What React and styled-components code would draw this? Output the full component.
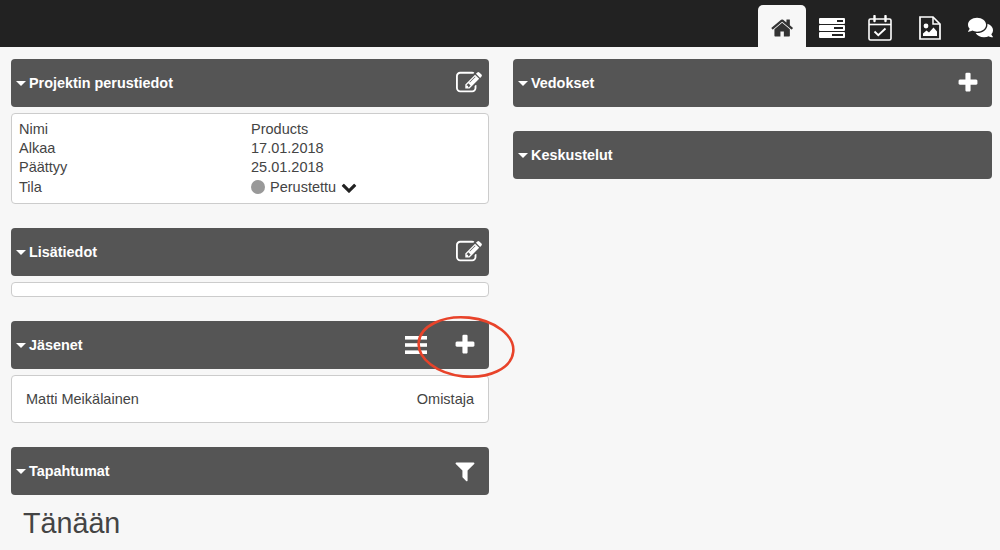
import React from "react";
import styled, { createGlobalStyle } from "styled-components";
import { FaComments } from "react-icons/fa";

const GlobalStyle = createGlobalStyle`
  html, body {
    margin: 0;
    height: 100%;
    overflow: hidden;
    background: #f7f7f7;
    font-family: "Liberation Sans", Arial, sans-serif;
    color: #444;
  }
`;

const glyphs = {
  home: "M1408 992v480q0 26-19 45t-45 19h-384v-384h-256v384h-384q-26 0-45-19t-19-45v-480q0-1 .5-3t.5-3l575-474 575 474q1 2 1 6zm223-69l-62 74q-8 9-21 11h-3q-13 0-21-7l-692-577-692 577q-12 8-24 7-13-2-21-11l-62-74q-8-10-7-23.5t11-21.5l719-599q32-26 76-26t76 26l244 204v-195q0-14 9-23t23-9h192q14 0 23 9t9 23v408l219 182q10 8 11 21.5t-7 23.5z",
  edit: "M888 1184l116-116-152-152-116 116v56h96v96h56zm440-720q-16-16-33 1l-350 350q-17 17-1 33t33-1l350-350q17-17 1-33zm80 594v190q0 119-84.5 203.5t-203.5 84.5h-832q-119 0-203.5-84.5t-84.5-203.5v-832q0-119 84.5-203.5t203.5-84.5h832q63 0 117 25 15 7 18 23 3 17-9 29l-49 49q-14 14-32 8-23-6-45-6h-832q-66 0-113 47t-47 113v832q0 66 47 113t113 47h832q66 0 113-47t47-113v-126q0-13 9-22l64-64q15-15 35-7t20 29zm-96-738l288 288-672 672h-288v-288zm444 132l-92 92-288-288 92-92q28-28 68-28t68 28l152 152q28 28 28 68t-28 68z",
  plus: "M1600 736v192q0 40-28 68t-68 28h-416v416q0 40-28 68t-68 28h-192q-40 0-68-28t-28-68v-416h-416q-40 0-68-28t-28-68v-192q0-40 28-68t68-28h416v-416q0-40 28-68t68-28h192q40 0 68 28t28 68v416h416q40 0 68 28t28 68z",
  filter: "M1595 295q17 41-14 70l-493 493v742q0 42-39 59-13 5-25 5-27 0-45-19l-256-256q-19-19-19-45v-486l-493-493q-31-29-14-70 17-39 59-39h1280q42 0 59 39z",
  chevron: "M1683 808l-742 741q-19 19-45 19t-45-19l-742-741q-19-19-19-45.5t19-45.5l166-166q19-19 45-19t45 19l531 531 531-531q19-19 45-19t45 19l166 166q19 19 19 45.5t-19 45.5z",
};

const Glyph = ({ name, size }) => (
  <svg width={size} height={size} viewBox="0 0 1792 1792" fill="currentColor">
    <path d={glyphs[name]} />
  </svg>
);

const ServerIcon = () => (
  <svg width="26" height="20" viewBox="0 0 26 20" fill="#fff">
    <path fillRule="evenodd" d="M1 0h24a1 1 0 0 1 1 1v4a1 1 0 0 1-1 1H1a1 1 0 0 1-1-1V1a1 1 0 0 1 1-1zM18 2v2h6V2z" />
    <path fillRule="evenodd" d="M1 7h24a1 1 0 0 1 1 1v4a1 1 0 0 1-1 1H1a1 1 0 0 1-1-1V8a1 1 0 0 1 1-1zM15 9v2h9V9z" />
    <path fillRule="evenodd" d="M1 14h24a1 1 0 0 1 1 1v4a1 1 0 0 1-1 1H1a1 1 0 0 1-1-1v-4a1 1 0 0 1 1-1zM13 16v2h11v-2z" />
  </svg>
);

const CalendarIcon = () => (
  <svg width="24" height="26" viewBox="0 0 24 26" fill="none" stroke="#fff">
    <rect x="1" y="4" width="22" height="21" rx="1.5" strokeWidth="1.6" />
    <path d="M1 9.5h22" strokeWidth="1.6" />
    <path d="M6.5 1v5M17.5 1v5" strokeWidth="2.4" strokeLinecap="round" />
    <path d="M6.5 16.5l3.8 3.6 7.2-6.6" strokeWidth="1.9" />
  </svg>
);

const FileImageIcon = () => (
  <svg width="22" height="24" viewBox="0 0 22 24">
    <path d="M1 1h13l7 7v15H1z" fill="none" stroke="#fff" strokeWidth="1.7" />
    <path d="M14 1v7h7" fill="none" stroke="#fff" strokeWidth="1.5" />
    <circle cx="7" cy="10" r="2.4" fill="#fff" />
    <path d="M4 20v-2.5l3.5-3 2.5 2 4.5-5 3.5 4V20z" fill="#fff" />
  </svg>
);

const ListIcon = () => (
  <svg width="22" height="18" viewBox="0 0 22 18" fill="#fff">
    <rect width="22" height="3.6" y="0" />
    <rect width="22" height="3.6" y="7.2" />
    <rect width="22" height="3.6" y="14.4" />
  </svg>
);

const TopBar = styled.header`
  height: 47px;
  background: #222;
  display: flex;
  justify-content: flex-end;
  align-items: flex-end;
  overflow: hidden;
`;

const Tab = styled.div`
  width: 48px;
  height: 42px;
  box-sizing: border-box;
  padding: 3px 0 0 ${(p) => p.$nudge || 0}px;
  margin-right: ${(p) => p.$gap || 0}px;
  flex-shrink: 0;
  display: flex;
  align-items: center;
  justify-content: center;
  color: ${(p) => (p.$active ? "#333" : "#fff")};
  background: ${(p) => (p.$active ? "#f7f7f7" : "transparent")};
  border-radius: 5px 5px 0 0;
`;

const Columns = styled.main`
  display: grid;
  grid-template-columns: 478px 479px;
  column-gap: 24px;
  padding: 12px 0 0 11px;
  align-items: start;
`;

const Column = styled.div`
  display: flex;
  flex-direction: column;
  gap: 24px;
`;

const Panel = styled.section`
  display: flex;
  flex-direction: column;
  gap: 6px;
`;

const PanelHeader = styled.div`
  position: relative;
  height: 48px;
  box-sizing: border-box;
  background: #555;
  border-radius: 4px;
  display: flex;
  align-items: center;
  padding: 0 7px 0 5px;
  color: #fff;
`;

const Caret = styled.span`
  width: 0;
  height: 0;
  border-left: 5px solid transparent;
  border-right: 5px solid transparent;
  border-top: 5px solid #fff;
  margin-right: 3px;
`;

const Title = styled.h3`
  margin: 0;
  flex: 1;
  font-size: 14.4px;
  font-weight: bold;
`;

const HeaderIcon = styled.span`
  display: flex;
  align-items: center;
  justify-content: center;
  margin-right: ${(p) => p.$right || 0}px;
`;

const Ring = styled.svg`
  position: absolute;
  left: 404px;
  top: -5px;
  width: 100px;
  height: 64px;
  overflow: visible;
  pointer-events: none;
`;

const Card = styled.div`
  background: #fff;
  border: 1px solid #ccc;
  border-radius: 4px;
  box-sizing: border-box;
  min-height: 15px;
  font-size: 14.5px;
`;

const InfoGrid = styled.dl`
  margin: 0;
  padding: 5px 7px 7px;
  display: grid;
  grid-template-columns: 232px 1fr;
  grid-auto-rows: 19.3px;
  align-items: center;
`;

const Label = styled.dt`
  margin: 0;
`;

const Value = styled.dd`
  margin: 0;
  display: flex;
  align-items: center;
`;

const StatusDot = styled.span`
  width: 14px;
  height: 14px;
  border-radius: 50%;
  background: #999;
  margin-right: 5px;
`;

const Chevron = styled.span`
  display: flex;
  margin-left: 5px;
  color: #222;
`;

const MemberRow = styled.div`
  display: flex;
  justify-content: space-between;
  align-items: center;
  height: 46px;
  padding: 0 14px;
`;

const DayTitle = styled.h2`
  margin: 5px 0 0 12px;
  font-size: 28.7px;
  line-height: 34px;
  font-weight: normal;
  color: #444;
`;

const EditIcon = () => (
  <HeaderIcon>
    <Glyph name="edit" size={26} />
  </HeaderIcon>
);

export default function App() {
  return (
    <>
      <GlobalStyle />
      <TopBar>
        <Tab $active $gap={2} $nudge={2}>
          <Glyph name="home" size={24} />
        </Tab>
        <Tab>
          <ServerIcon />
        </Tab>
        <Tab $gap={2}>
          <CalendarIcon />
        </Tab>
        <Tab>
          <FileImageIcon />
        </Tab>
        <Tab $gap={-2} $nudge={4}>
          <FaComments size={25} />
        </Tab>
      </TopBar>
      <Columns>
        <Column>
          <Panel>
            <PanelHeader>
              <Caret />
              <Title>Projektin perustiedot</Title>
              <EditIcon />
            </PanelHeader>
            <Card>
              <InfoGrid>
                <Label>Nimi</Label>
                <Value>Products</Value>
                <Label>Alkaa</Label>
                <Value>17.01.2018</Value>
                <Label>Päättyy</Label>
                <Value>25.01.2018</Value>
                <Label>Tila</Label>
                <Value>
                  <StatusDot />
                  Perustettu
                  <Chevron>
                    <Glyph name="chevron" size={16} />
                  </Chevron>
                </Value>
              </InfoGrid>
            </Card>
          </Panel>
          <Panel>
            <PanelHeader>
              <Caret />
              <Title>Lisätiedot</Title>
              <EditIcon />
            </PanelHeader>
            <Card />
          </Panel>
          <Panel>
            <PanelHeader>
              <Caret />
              <Title>Jäsenet</Title>
              <HeaderIcon $right={26}>
                <ListIcon />
              </HeaderIcon>
              <HeaderIcon $right={5}>
                <Glyph name="plus" size={24} />
              </HeaderIcon>
              <Ring viewBox="0 0 100 64">
                <ellipse
                  cx="51"
                  cy="31"
                  rx="47.5"
                  ry="29.5"
                  fill="none"
                  stroke="#e8432a"
                  strokeWidth="2.6"
                  transform="rotate(6 51 31)"
                />
              </Ring>
            </PanelHeader>
            <Card>
              <MemberRow>
                <span>Matti Meikälainen</span>
                <span>Omistaja</span>
              </MemberRow>
            </Card>
          </Panel>
          <Panel>
            <PanelHeader>
              <Caret />
              <Title>Tapahtumat</Title>
              <HeaderIcon $right={5}>
                <Glyph name="filter" size={24} />
              </HeaderIcon>
            </PanelHeader>
            <DayTitle>Tänään</DayTitle>
          </Panel>
        </Column>
        <Column>
          <Panel>
            <PanelHeader>
              <Caret />
              <Title>Vedokset</Title>
              <HeaderIcon $right={5}>
                <Glyph name="plus" size={24} />
              </HeaderIcon>
            </PanelHeader>
          </Panel>
          <Panel>
            <PanelHeader>
              <Caret />
              <Title>Keskustelut</Title>
            </PanelHeader>
          </Panel>
        </Column>
      </Columns>
    </>
  );
}
